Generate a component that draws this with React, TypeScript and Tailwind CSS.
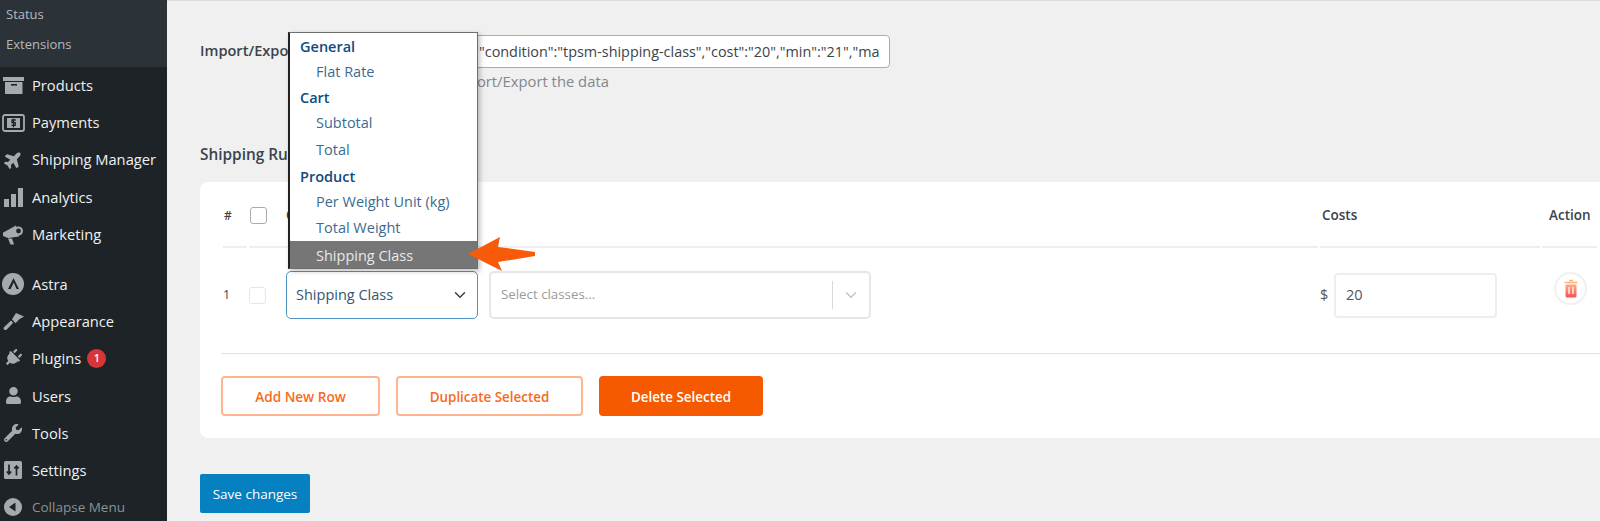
import React from "react";
import { FaPlane, FaPlug, FaUser, FaWrench } from "react-icons/fa";
import { ChevronDown } from "lucide-react";

const ic = "text-[#a7aaad]";

const Archive = () => (
  <svg width="21" height="17" viewBox="0 0 21 17" fill="#a7aaad"><rect x="0" y="0" width="21" height="4" /><path d="M2 5h17.5v12H2z" /><rect x="8" y="7" width="6" height="1.6" fill="#1d2327" /></svg>
);
const Pay = () => (
  <svg width="23" height="18" viewBox="0 0 23 18" fill="none"><rect x="1" y="1" width="21" height="16" rx="2" stroke="#a7aaad" strokeWidth="1.8" /><rect x="5" y="4" width="13" height="10" fill="#a7aaad" /><path d="M13.8 6H10v2.7h3.2v2.6H9.4M11.5 4.8v8.4" stroke="#1d2327" strokeWidth="1.3" /></svg>
);
const Bars = () => (
  <svg width="19" height="19" viewBox="0 0 19 19" fill="#a7aaad"><rect x="0" y="11" width="5" height="8" /><rect x="7" y="6" width="5" height="13" /><rect x="14" y="0" width="5" height="19" /></svg>
);
const Horn = () => (
  <svg width="20" height="21" viewBox="0 0 20 21" fill="#a7aaad"><path d="M0 8.5 3 7l10-5.5 3 11L5.5 14l-.5.1L0 12z" /><circle cx="15.5" cy="7" r="4.5" /><circle cx="15.5" cy="7" r="2.4" fill="#1d2327" /><path d="M5 14.5h4l2 6H7.5z" /></svg>
);
const Brush = () => (
  <svg width="21" height="19" viewBox="0 0 21 19" fill="#a7aaad"><path d="M1 18.5c-.8-.8-.6-1.8.2-2.6L8 9.5l2.2 2.2-6.4 6.8c-.8.7-2 .8-2.8 0z" /><path d="M9 8.3 13 2l8 3.5-5 3-3.5 3.8z" /></svg>
);
const AstraI = () => (
  <svg width="22" height="22" viewBox="0 0 22 22"><circle cx="11" cy="11" r="11" fill="#a7aaad" /><path d="M11.5 5 6 16h2.6l3.2-6.6L14.5 16H17z" fill="#1d2327" /></svg>
);
const Sliders = () => (
  <svg width="18" height="18" viewBox="0 0 18 18"><rect width="18" height="18" rx="1.5" fill="#a7aaad" /><path d="M5 3.5v9M2.8 10.5 5 13l2.2-2.5M12.5 14.500v-9M10.3 7.5 12.5 5l2.2 2.5" stroke="#1d2327" strokeWidth="1.7" fill="none" /></svg>
);
const Collapse = () => (
  <svg width="18" height="18" viewBox="0 0 18 18"><circle cx="9" cy="9" r="9" fill="#a7aaad" /><path d="M11.5 4.5v9L5 9z" fill="#1d2327" /></svg>
);

const menu: [string, React.ReactNode, string][] = [
  ["Products", <Archive />, "h-[37px]"],
  ["Payments", <Pay />, "h-[37px]"],
  ["Shipping Manager", <FaPlane size={19} className={`${ic} -rotate-45`} />, "h-[37px]"],
  ["Analytics", <Bars />, "h-[38px]"],
  ["Marketing", <Horn />, "h-[37px]"],
];
const menu2: [string, React.ReactNode][] = [
  ["Astra", <AstraI />],
  ["Appearance", <Brush />],
  ["Plugins", <FaPlug size={18} className={`${ic} rotate-45`} />],
  ["Users", <FaUser size={17} className={ic} />],
  ["Tools", <FaWrench size={18} className={ic} />],
  ["Settings", <Sliders />],
];

function Item({ label, icon, cls = "h-[37.3px]", badge }: { label: string; icon: React.ReactNode; cls?: string; badge?: boolean }) {
  return (
    <div className={`flex items-center shrink-0 ${cls}`}>
      <div className="w-[26px] mr-[6px] flex justify-center shrink-0">{icon}</div>
      <span className="text-[14.7px] text-[#eef0f1]">{label}</span>
      {badge && <span className="ml-[6px] w-[19px] h-[19px] rounded-full bg-[#d63638] text-white text-[10px] font-semibold flex items-center justify-center">1</span>}
    </div>
  );
}

const drop = "text-[14.5px] text-[#3d6b8f] pl-[26px] flex items-center shrink-0";
const group = "text-[14.5px] font-semibold text-[#0f4c7d] pl-[10px] flex items-center shrink-0";

export default function App() {
  return (
    <div className="flex w-[1600px] h-[521px] overflow-hidden bg-[#f0f0f0] relative text-[#3c434a]" style={{ fontFamily: '"Open Sans", sans-serif' }}>
      <aside className="w-[167px] shrink-0 bg-[#1d2327] flex flex-col">
        <div className="h-[67px] shrink-0 bg-[#2c3338] text-[13px] text-[#b4b9be] pl-[6px]">
          <div className="h-[29px] flex items-center">Status</div>
          <div className="h-[31px] flex items-center">Extensions</div>
        </div>
        {menu.map(([l, i, c]) => <Item key={l} label={l} icon={i} cls={c} />)}
        <div className="h-[12px] shrink-0" />
        {menu2.map(([l, i]) => <Item key={l} label={l} icon={i} badge={l === "Plugins"} />)}
        <div className="flex items-center h-[37px] shrink-0 text-[#8c9196]">
          <div className="w-[26px] mr-[6px] flex justify-center"><Collapse /></div>
          <span className="text-[13.5px]">Collapse Menu</span>
        </div>
      </aside>

      <main className="flex-1 min-w-0 pl-[33px] flex flex-col border-t border-[#dcdcdc]">
        <div className="flex h-[33px] mt-[34px] items-center shrink-0">
          <div className="w-[250px] font-semibold text-[14.6px] pb-[2px]">Import/Export</div>
          <div className="w-[440px] h-[33px] border border-[#a8acb0] rounded-[4px] bg-white flex items-center pl-[28px] pr-[9px]">
            <div className="flex-1 overflow-hidden">
              <div className="text-[14.4px] whitespace-nowrap">{'"condition":"tpsm-shipping-class","cost":"20","min":"21","max":"30"'}</div>
            </div>
          </div>
        </div>
        <div className="ml-[250px] text-[14.8px] text-[#82878c] mt-[1px] h-[24px] flex items-center shrink-0">Import/Export the data</div>
        <div className="mt-[50px] font-semibold text-[15.4px] h-[24px] flex items-center shrink-0">Shipping Rules</div>
        <section className="mt-[15px] h-[256px] bg-white rounded-l-[8px] flex flex-col pl-[21px] shrink-0">
          <div className="h-[64px] flex items-center text-[13.5px] font-semibold shrink-0 pt-[3px]">
            <span className="w-[29px] pl-[3px] text-[12px]">#</span>
            <span className="w-[17px] h-[17px] border-[1.5px] border-[#a9acaf] rounded-[3px]" />
            <span className="ml-[19px] w-[1036px]">Condition</span>
            <span className="w-[227px]">Costs</span>
            <span>Action</span>
          </div>
          <div className="flex h-[2px] gap-[2px] pl-[2px] pr-[3px] shrink-0">
            <div className="w-[24px] bg-[#eeeeee]" />
            <div className="w-[1069px] bg-[#eeeeee]" />
            <div className="w-[220px] bg-[#eeeeee]" />
            <div className="flex-1 bg-[#eeeeee]" />
          </div>
          <div className="h-[106px] flex items-center border-b border-[#e2e3e4] pb-[11px] shrink-0">
            <span className="w-[28px] text-[12.5px] pl-[2px]">1</span>
            <span className="w-[17px] h-[17px] border-[1.5px] border-[#e5e5e5] rounded-[3px]" />
            <div className="ml-[20px] w-[192px] h-[48px] border-[1.5px] border-[#4f94c4] rounded-[5px] flex items-center justify-between pl-[9px] pr-[8px] text-[14.5px] text-[#35566f]">
              <span>Shipping Class</span>
              <ChevronDown size={18} strokeWidth={2} className="text-[#3c434a]" />
            </div>
            <div className="ml-[11px] w-[382px] h-[48px] border-2 border-[#e6e6e6] rounded-[5px] flex items-center pl-[10px] text-[13.3px] text-[#9b9b9b]">
              <span className="flex-1">Select classes...</span>
              <span className="w-[1px] h-[28px] bg-[#d9d9d9]" />
              <ChevronDown size={18} strokeWidth={2} className="mx-[9px] text-[#c4c4c4]" />
            </div>
            <span className="ml-[449px] w-[8px] text-[14.5px] text-[#555]">$</span>
            <div className="ml-[6px] w-[163px] h-[45px] border-2 border-[#eeeeee] rounded-[4px] flex items-center pl-[10px] text-[14.5px] text-[#50575e]">20</div>
            <div className="ml-[57px] mb-[14px] w-[33px] h-[33px] rounded-full border-2 border-[#f0f0f0] flex items-center justify-center">
              <svg width="14" height="19" viewBox="0 0 14 19">
                <defs><linearGradient id="tg" x1="0" y1="0" x2="0" y2="1"><stop offset="0" stopColor="#fbb07f" /><stop offset="1" stopColor="#f8505a" /></linearGradient></defs>
                <path d="M5 1.5h4M0.5 3.5h13" stroke="#fbb07f" strokeWidth="1.6" fill="none" />
                <path d="M1.5 5.5h11v11.5a1.5 1.5 0 0 1-1.5 1.5H3a1.5 1.5 0 0 1-1.5-1.5z" fill="url(#tg)" />
                <path d="M5 8v7M9 8v7" stroke="#ffe3d8" strokeWidth="1.6" />
              </svg>
            </div>
          </div>
          <div className="flex gap-[16px] mt-[22px] text-[13.4px] font-semibold shrink-0">
            <button className="w-[159px] h-[40px] pt-[3px] border-2 border-[#fdb592] rounded-[4px] text-[#f76a22] text-[13.6px]">Add New Row</button>
            <button className="w-[187px] h-[40px] pt-[3px] border-2 border-[#fdb592] rounded-[4px] text-[#f76a22]">Duplicate Selected</button>
            <button className="w-[164px] h-[40px] pt-[3px] bg-[#f55a00] rounded-[4px] text-white">Delete Selected</button>
          </div>
        </section>
        <button className="mt-[36px] w-[110px] h-[39px] pt-[2px] bg-[#0580c1] rounded-[2px] text-white text-[13.5px] font-medium shrink-0">Save changes</button>
      </main>

      <div className="absolute left-[288px] top-[32px] w-[190px] h-[237px] bg-white border border-[#6f6f6f] border-l-2 border-l-[#222] shadow-[2px_2px_5px_rgba(0,0,0,0.25)] flex flex-col">
        <div className={`${group} h-[27px]`}>General</div>
        <div className={`${drop} h-[24px]`}>Flat Rate</div>
        <div className={`${group} h-[24px] mt-[2px]`}>Cart</div>
        <div className={`${drop} h-[25px]`}>Subtotal</div>
        <div className={`${drop} h-[27px] pt-[2px]`}>Total</div>
        <div className={`${group} h-[23px] mt-[3px]`}>Product</div>
        <div className={`${drop} h-[25px] mt-[1px]`}>Per Weight Unit (kg)</div>
        <div className={`${drop} h-[27px]`}>Total Weight</div>
        <div className={`${drop} bg-[#767676] text-[#e8e8e8] flex-1 !shrink pt-[2px]`}>Shipping Class</div>
      </div>
      <svg className="absolute left-[467px] top-[235px]" width="72" height="38" viewBox="0 0 72 38"><path d="M1 19 33 2 31 12 68 17 68 21 31 27 35 36z" fill="#f75a08" /></svg>
    </div>
  );
}
